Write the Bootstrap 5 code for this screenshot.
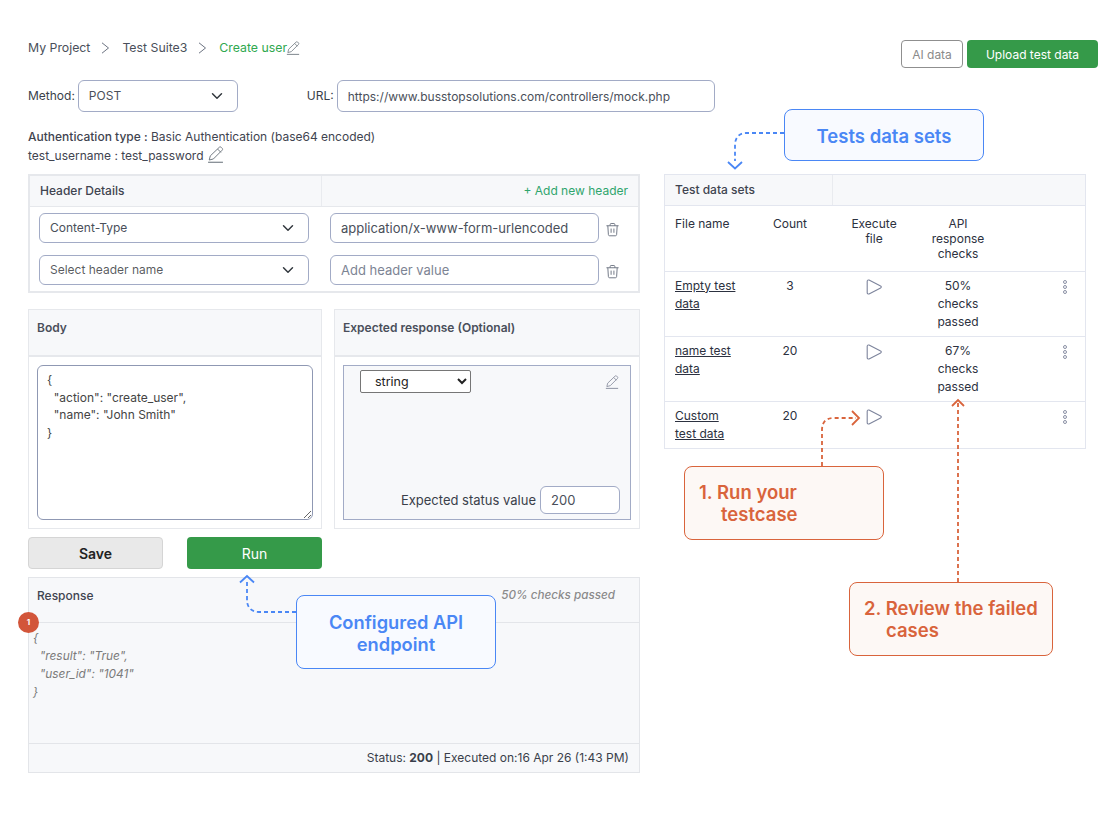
<!DOCTYPE html>
<html lang="en">
<head>
    <meta charset="UTF-8">
    <meta name="viewport" content="width=device-width, initial-scale=1.0">
    <title>Create user</title>
    <link rel="stylesheet" href="https://cdn.jsdelivr.net/npm/bootstrap@5.3.0/dist/css/bootstrap.min.css">
    <style>
        body { font-family: Inter, "Liberation Sans", sans-serif; font-size: 12px; color: #3f4450; background: #fff; }
        .page-wrap { position: relative; width: 1120px; height: 819px; padding: 40px 22px 0 28px; overflow: hidden; }
        .crumbs { line-height: 14px; padding-top: 1px; font-size: 12.3px; color: #4a4f5a; }
        .crumb-sep { width: 10px; height: 12px; margin: 0 12px 0 10px; color: #6b7280; }
        .crumb-now { color: #2fa84f; margin-right: -1px; }
        .btn-ai { width: 62px; height: 28px; padding: 1px 0 0; font-size: 12px; color: #8a8a8a; border: 1px solid #8f8f8f; border-radius: 4px; background: #fff; }
        .btn-upload { width: 131px; height: 28px; padding: 1px 0 0; font-size: 12px; color: #fff; background: #359a49; border: 0; border-radius: 4px; }
        .field-row { margin-top: 12px; height: 32px; color: #3a3f4a; }
        .fld { height: 30px; padding: 0 10px; font-size: 12px; color: #4a4f5a; border: 1px solid #a2abc6; border-radius: 6px; box-shadow: none; }
        .fld::placeholder { color: #7d8494; opacity: 1; }
        select.fld { padding-right: 30px; }
        .fld-method { width: 160px; height: 32px; margin-left: 3px; }
        .fld-url { width: 378px; height: 32px; margin-left: 3px; }
        .url-label { margin-left: 69px; }
        .auth-block { margin-top: 15px; line-height: 19px; }
        .main-grid { display: grid; grid-template-columns: 612px 422px; column-gap: 24px; margin-top: 9px; }
        .panel-box { border: 2px solid #e6e8ec; background: #fff; }
        .panel-head { background: #f7f8fa; border-bottom: 1px solid #e6e8ec; font-weight: 500; }
        .hdr-head { height: 31px; display: grid; grid-template-columns: 291px 1fr; line-height: 30px; }
        .hdr-head > div { padding: 0 10px; }
        .hdr-head > div + div { border-left: 1px solid #e9ebef; text-align: right; color: #2fa56d; font-weight: 400; }
        .hdr-rows { padding: 6px 9px; }
        .hdr-line { display: grid; grid-template-columns: 270px 269px 24px; align-items: center; height: 30px; margin-bottom: 12px; }
        .hdr-line:last-child { margin-bottom: 0; }
        .hdr-line .col-val { margin-left: 21px; width: 269px; font-size: 13px; }
        .hdr-line select { width: 270px; }
        .hdr-line .ico-trash { margin: 2px 0 0 27px; color: #6b7280; }
        .two-up { display: grid; grid-template-columns: 294px 306px; column-gap: 12px; margin-top: 16px; }
        .edit-box { height: 220px; border: 1px solid #e6e8ec; display: flex; flex-direction: column; }
        .edit-head { height: 47px; background: #f7f8fa; border-bottom: 2px solid #e6e8ec; padding: 9px 8px; font-weight: 600; font-size: 12px; color: #4a4f5a; }
        .body-text { width: 276px; height: 155px; margin: 8px; padding: 5px 9px; border: 1px solid #8f98b3; border-radius: 6px; font-size: 12px; line-height: 17.5px; color: #444; resize: both; }
        .expect-area { position: relative; flex: 1; margin: 8px; border: 1px solid #a2abc6; background: #f7f8fa; }
        .type-select { position: absolute; left: 16px; top: 4px; width: 111px; height: 23px; font-size: 12.5px; padding-left: 10px; border-radius: 2px; background: #fff; color: #222; }
        .expect-pen { position: absolute; right: 11px; top: 9px; color: #7f8596; }
        .status-line { position: absolute; right: 10px; bottom: 5px; display: flex; align-items: center; gap: 4px; font-size: 13px; color: #3a3f4a; }
        .status-line span { padding-top: 2px; }
        .fld-status { width: 80px; height: 28px; border-radius: 6px; font-size: 13px; }
        .action-row { display: flex; gap: 24px; margin-top: 8px; }
        .btn-save { width: 135px; height: 32px; padding: 0; font-size: 14px; font-weight: 600; color: #222; background: #e9e9e9; border: 1px solid #d5d5d5; border-radius: 4px; }
        .btn-run { width: 135px; height: 32px; padding: 0; font-size: 14px; color: #fff; background: #359a49; border: 0; border-radius: 4px; }
        .resp-box { margin-top: 8px; height: 196px; background: #f7f8fa; border: 1px solid #e3e5e9; display: flex; flex-direction: column; }
        .resp-head { height: 45px; border-bottom: 1px solid #e3e5e9; display: flex; justify-content: space-between; padding: 9px 24px 0 8px; font-weight: 500; }
        .resp-rate { font-style: italic; font-size: 11.7px; color: #8a8a8a; font-weight: 500; }
        .resp-body { flex: 1; padding: 6px 4px; font-size: 11.9px; line-height: 18px; font-style: italic; color: #7b7b7b; white-space: pre; }
        .resp-foot { height: 29px; border-top: 1px solid #e3e5e9; line-height: 28px; text-align: right; padding-right: 10px; color: #3a3f4a; }
        .alert-dot { position: absolute; left: 18px; top: 612px; width: 21px; height: 21px; border-radius: 50%; background: #d2553a; color: #fff; font-size: 8px; font-weight: 700; line-height: 21px; text-align: center; }
        .data-box { border: 1px solid #e3e6ef; align-self: start; }
        .data-head { height: 31px; display: grid; grid-template-columns: 167px 1fr; background: #f7f8fa; border-bottom: 1px solid #e3e6ef; line-height: 29px; font-weight: 500; }
        .data-head > div { padding: 0 10px; }
        .data-head > div + div { border-left: 1px solid #e9ebef; }
        .set-table { table-layout: fixed; width: 420px; margin: 0; font-size: 12px; color: #333a48; }
        .set-table th, .set-table td { padding: 10px 8px 0; border-bottom: 1px solid #e3e6ef; line-height: 15px; font-weight: 400; color: #2c3140; text-align: center; vertical-align: top; background: transparent; }
        .set-table td { line-height: 18px; padding-top: 5px; }
        .set-table tr:last-child td { border-bottom: 0; }
        .set-table .name-cell { text-align: left; padding-left: 10px; padding-right: 10px; }
        .set-table .exec-cell { padding-left: 12px; padding-right: 12px; }
        .set-table a { color: #2c3140; }
        .set-table .menu-cell { text-align: right; padding-right: 17px; }
        .ico-play { color: #7d849c; margin-top: 2px; }
        .ico-dots { color: #8a90a5; margin-top: 2px; }
        .row-head, .row-data { height: 65px; }
        .row-last { height: 47px; }
        .note-box { position: absolute; font-size: 18.5px; font-weight: 600; line-height: 22px; border-radius: 8px; }
        .note-blue { color: #4a87f5; background: #f8faff; border: 1px solid #4a87f5; text-align: center; display: flex; align-items: center; justify-content: center; padding-top: 2px; }
        .note-red { color: #d9643c; background: #fdf8f5; border: 1px solid #d9643c; padding: 14px; }
        .note-red span { display: block; padding-left: 22px; }
        .note-tests { left: 784px; top: 109px; width: 200px; height: 52px; }
        .note-api { left: 296px; top: 595px; width: 200px; height: 74px; font-size: 18.3px; padding-top: 1px; }
        .note-run { left: 684px; top: 466px; width: 200px; height: 74px; }
        .note-review { left: 849px; top: 582px; width: 204px; height: 74px; }
        .arrow-layer { position: absolute; left: 0; top: 0; pointer-events: none; }
    </style>
</head>
<body>
<svg width="0" height="0" class="position-absolute">
    <symbol id="pen" viewBox="0 0 16 16"><path d="M11.6 1.200c.5-.5 1.200-.5 1.700 0l1 1c.5.5.5 1.200 0 1.700L6 12.200l-3.900 1 1-3.900zM10 2.900l3.100 3.100" fill="none" stroke="currentColor" stroke-width=".9"/><path d="M1 15.300h14" stroke="currentColor" stroke-width="1"/></symbol>
    <symbol id="trash" viewBox="0 0 16 16"><path d="M1.500 4h13M5.500 4V2.600c0-.6.4-1 1-1h3c.6 0 1 .4 1 1V4M3 4l.6 9.400c0 .8.6 1.300 1.300 1.300h6.200c.7 0 1.300-.5 1.300-1.300L13 4M6.500 7v4.500M9.500 7v4.500" fill="none" stroke="currentColor" stroke-width="1"/></symbol>
    <symbol id="play" viewBox="0 0 16 16"><path d="M1.200 2.200C1.200 1.200 2.200.7 3 1.100l11.600 6c.9.4.9 1.400 0 1.800L3 14.900c-.8.4-1.800-.1-1.800-1.100z" fill="none" stroke="currentColor" stroke-width="1.100"/></symbol>
    <symbol id="dots" viewBox="0 0 6 14"><circle cx="3" cy="2" r="1.500" fill="none" stroke="currentColor"/><circle cx="3" cy="7" r="1.500" fill="none" stroke="currentColor"/><circle cx="3" cy="12" r="1.500" fill="none" stroke="currentColor"/></symbol>
    <symbol id="crumb" viewBox="0 0 10 12"><path d="M2 .8 8.500 6 2 11.200" fill="none" stroke="currentColor" stroke-width="1"/></symbol>
</svg>

<div class="page-wrap">
    <div class="d-flex justify-content-between align-items-start">
        <div class="crumbs d-flex align-items-center">
            <span>My Project</span>
            <svg class="crumb-sep"><use href="#crumb"/></svg>
            <span>Test Suite3</span>
            <svg class="crumb-sep"><use href="#crumb"/></svg>
            <span class="crumb-now">Create user</span>
            <svg width="14" height="14" class="text-secondary"><use href="#pen"/></svg>
        </div>
        <div class="d-flex gap-1">
            <button type="button" class="btn btn-ai">AI data</button>
            <button type="button" class="btn btn-upload">Upload test data</button>
        </div>
    </div>

    <div class="field-row d-flex align-items-center">
        <span>Method:</span>
        <select class="form-select fld fld-method"><option>POST</option></select>
        <span class="url-label">URL:</span>
        <input type="text" class="form-control fld fld-url" value="https://www.busstopsolutions.com/controllers/mock.php">
    </div>

    <div class="auth-block">
        <div><span class="fw-medium">Authentication type :</span> Basic Authentication (base64 encoded)</div>
        <div>test_username : test_password <svg width="17" height="17" class="text-secondary align-text-bottom"><use href="#pen"/></svg></div>
    </div>

    <div class="main-grid">
        <div>
            <div class="panel-box">
                <div class="panel-head hdr-head">
                    <div>Header Details</div>
                    <div>+ Add new header</div>
                </div>
                <div class="hdr-rows">
                    <div class="hdr-line">
                        <select class="form-select fld"><option>Content-Type</option></select>
                        <input type="text" class="form-control fld col-val" value="application/x-www-form-urlencoded">
                        <svg width="15" height="15" class="ico-trash"><use href="#trash"/></svg>
                    </div>
                    <div class="hdr-line">
                        <select class="form-select fld text-muted"><option>Select header name</option></select>
                        <input type="text" class="form-control fld col-val" placeholder="Add header value">
                        <svg width="15" height="15" class="ico-trash"><use href="#trash"/></svg>
                    </div>
                </div>
            </div>

            <div class="two-up">
                <div class="edit-box">
                    <div class="edit-head">Body</div>
                    <textarea class="body-text">{
  "action": "create_user",
  "name": "John Smith"
}</textarea>
                </div>
                <div class="edit-box">
                    <div class="edit-head">Expected response (Optional)</div>
                    <div class="expect-area">
                        <select class="type-select"><option>string</option></select>
                        <svg width="14" height="14" class="expect-pen"><use href="#pen"/></svg>
                        <div class="status-line">
                            <span>Expected status value</span>
                            <input type="text" class="form-control fld fld-status" value="200">
                        </div>
                    </div>
                </div>
            </div>

            <div class="action-row">
                <button type="button" class="btn btn-save">Save</button>
                <button type="button" class="btn btn-run">Run</button>
            </div>

            <div class="resp-box">
                <div class="resp-head">
                    <span>Response</span>
                    <span class="resp-rate">50% checks passed</span>
                </div>
                <div class="resp-body">{
  "result": "True",
  "user_id": "1041"
}</div>
                <div class="resp-foot">Status: <b class="fw-bold">200</b> | Executed on:16 Apr 26 (1:43 PM)</div>
            </div>
        </div>

        <div class="data-box">
            <div class="data-head">
                <div>Test data sets</div>
                <div></div>
            </div>
            <table class="table set-table">
                <colgroup><col style="width:85px"><col style="width:80px"><col style="width:88px"><col style="width:80px"><col></colgroup>
                <tr class="row-head">
                    <th class="name-cell">File name</th>
                    <th>Count</th>
                    <th class="exec-cell">Execute file</th>
                    <th>API response checks</th>
                    <th></th>
                </tr>
                <tr class="row-data">
                    <td class="name-cell"><a href="#">Empty test data</a></td>
                    <td>3</td>
                    <td><svg width="16" height="16" class="ico-play"><use href="#play"/></svg></td>
                    <td>50% checks passed</td>
                    <td class="menu-cell"><svg width="6" height="14" class="ico-dots"><use href="#dots"/></svg></td>
                </tr>
                <tr class="row-data">
                    <td class="name-cell"><a href="#">name test data</a></td>
                    <td>20</td>
                    <td><svg width="16" height="16" class="ico-play"><use href="#play"/></svg></td>
                    <td>67% checks passed</td>
                    <td class="menu-cell"><svg width="6" height="14" class="ico-dots"><use href="#dots"/></svg></td>
                </tr>
                <tr class="row-last">
                    <td class="name-cell"><a href="#">Custom test data</a></td>
                    <td>20</td>
                    <td><svg width="16" height="16" class="ico-play"><use href="#play"/></svg></td>
                    <td></td>
                    <td class="menu-cell"><svg width="6" height="14" class="ico-dots"><use href="#dots"/></svg></td>
                </tr>
            </table>
        </div>
    </div>

    <span class="alert-dot">1</span>

    <!-- callouts sit over the page -->
    <svg class="arrow-layer" width="1120" height="819" fill="none" stroke-width="1.8">
        <g stroke="#4a87f5" stroke-dasharray="4 3">
            <path d="M784 133H746c-7 0-11 5-11 12v16"/>
            <path d="M296 612H259c-8 0-12-5-12-12v-20"/>
        </g>
        <path d="M728 162l7 6.500 7-6.500M240 582.500l7-6.500 7 6.500" stroke="#4a87f5"/>
        <g stroke="#d9643c" stroke-dasharray="4 3">
            <path d="M822 466V430c0-8 4-12 12-12h22"/>
            <path d="M958 582V402"/>
        </g>
        <path d="M852 411l7 7-7 7M952 406l6-6 6 6" stroke="#d9643c"/>
    </svg>
    <div class="note-box note-blue note-tests">Tests data sets</div>
    <div class="note-box note-blue note-api">Configured API<br>endpoint</div>
    <div class="note-box note-red note-run">1. Run your<span>testcase</span></div>
    <div class="note-box note-red note-review">2. Review the failed<span>cases</span></div>
</div>
</body>
</html>
